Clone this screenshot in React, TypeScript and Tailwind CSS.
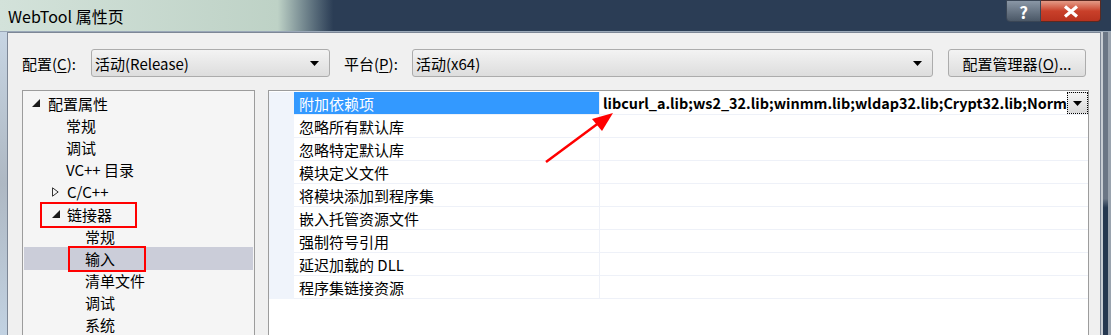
import React from 'react';

const font = { fontFamily: '"Noto Sans CJK SC", "Noto Sans", sans-serif' };

function Mn({ c }: { c: string }) {
    return <span className="underline underline-offset-2">{c}</span>;
}

function Combo({ text, width }: { text: string; width: string }) {
    return (
        <div className={`${width} h-[28px] flex items-center justify-between rounded-[3px] border border-[#acacac] bg-gradient-to-b from-[#f3f3f3] to-[#dddddd] pl-[3px] pr-[10px]`}>
            <span className="text-[15px] leading-none">{text}</span>
            <svg width="9" height="5" viewBox="0 0 9 5"><path d="M0 0h9L4.5 5z" fill="#000" /></svg>
        </div>
    );
}

function Expanded() {
    return <svg width="8" height="8" viewBox="0 0 8 8"><path d="M8 0V8H0z" fill="#1a1a1a" /></svg>;
}

function Collapsed() {
    return <svg width="7" height="10" viewBox="0 0 7 10"><path d="M0.5 0.8L6.2 5L0.5 9.2z" fill="none" stroke="#333" strokeWidth="1" /></svg>;
}

const tree = [
    { label: '配置属性', pad: 'pl-[9px]', icon: 'open', iw: 'w-[16px]' },
    { label: '常规', pad: 'pl-[43px]' },
    { label: '调试', pad: 'pl-[43px]' },
    { label: 'VC++ 目录', pad: 'pl-[43px]' },
    { label: 'C/C++', pad: 'pl-[29px]', icon: 'closed', iw: 'w-[15px]' },
    { label: '链接器', pad: 'pl-[29px]', icon: 'open', iw: 'w-[15px]', boxed: true },
    { label: '常规', pad: 'pl-[62px]' },
    { label: '输入', pad: 'pl-[62px]', selected: true, boxed: true },
    { label: '清单文件', pad: 'pl-[62px]' },
    { label: '调试', pad: 'pl-[62px]' },
    { label: '系统', pad: 'pl-[62px]' },
];

const props = [
    '附加依赖项',
    '忽略所有默认库',
    '忽略特定默认库',
    '模块定义文件',
    '将模块添加到程序集',
    '嵌入托管资源文件',
    '强制符号引用',
    '延迟加载的 DLL',
    '程序集链接资源',
];

export default function App() {
    return (
        <div className="relative w-[1111px] h-[335px] overflow-hidden bg-[#2b3d55] text-black" style={font}>
            {/* title bar */}
            <div className="h-[31px] flex items-center justify-between bg-gradient-to-r from-[#d3e2da] via-[#bed2c6] via-25% to-[#2b3d55] to-30%">
                <span className="pl-[8px] pt-[1px] text-[16px] leading-none">WebTool 属性页</span>
                <div className="self-start flex pr-[10px]">
                    <div className="w-[35px] h-[22px] flex items-center justify-center rounded-bl-[4px] border border-[#3a4656] bg-gradient-to-b from-[#8a97a6] to-[#4b5867] text-white text-[17px] font-bold leading-none">?</div>
                    <div className="w-[60px] h-[22px] flex items-center justify-center rounded-br-[4px] border border-l-0 border-[#5a2a22] bg-gradient-to-b from-[#e39a86] via-[#c9402a] to-[#b8321f]">
                        <svg width="16" height="13" viewBox="0 0 16 13"><path d="M2 1.5L14 11.5M14 1.5L2 11.5" stroke="#fff" strokeWidth="3.2" /></svg>
                    </div>
                </div>
            </div>
            <div className="h-[1px] bg-[#9aa8b8]" />
            <div className="flex h-[303px]">
                {/* left frame */}
                <div className="w-[7px] bg-gradient-to-b from-[#c7d5e3] via-[#aeb8c3] to-[#c2d2e2]" />
                {/* client area */}
                <div className="w-[1094px] border-t border-l border-r border-[#7d8796] bg-[#f0f0f0] pl-[14px] pr-[11px] pt-[16px]">
                    <div className="flex items-center h-[28px] text-[15px] leading-none">
                        <span className="w-[69px]">配置(<Mn c="C" />):</span>
                        <Combo text="活动(Release)" width="w-[239px]" />
                        <span className="ml-[14px] w-[68px]">平台(<Mn c="P" />):</span>
                        <Combo text="活动(x64)" width="w-[521px]" />
                        <div className="ml-[15px] w-[138px] h-[28px] flex items-center justify-center rounded-[3px] border border-[#acacac] bg-gradient-to-b from-[#f3f3f3] to-[#dddddd]">
                            配置管理器(<Mn c="O" />)...
                        </div>
                    </div>
                    <div className="flex gap-[13px] mt-[13px]">
                        {/* tree */}
                        <div className="w-[233px] h-[260px] shrink-0 border border-[#9c9c9c] bg-[#f5f5f5] pt-[1px] text-[15px] leading-none">
                            {tree.map((t, i) => (
                                <div key={i} className={`h-[22.2px] flex items-center ${t.pad} ${t.selected ? 'bg-[#cbcdd9] mx-[1px]' : ''}`}>
                                    {t.icon && (
                                        <span className={`${t.iw} flex items-center`}>
                                            {t.icon === 'open' ? <Expanded /> : <Collapsed />}
                                        </span>
                                    )}
                                    <span className={t.boxed ? `relative ${t.selected ? '-ml-[1px]' : ''}` : ''}>
                                        {t.label}
                                        {t.boxed && (
                                            <span className={`absolute border-2 border-[#ff0000] ${t.selected ? '-left-[17px] -right-[31px] -top-[5px] -bottom-[6px]' : '-left-[27px] -right-[25px] -top-[5px] -bottom-[6px]'}`} />
                                        )}
                                    </span>
                                </div>
                            ))}
                        </div>
                        {/* property grid */}
                        <div className="w-[821px] h-[260px] shrink-0 border border-[#9c9c9c] bg-white pt-[1px] text-[15px] leading-none">
                            {props.map((p, i) => (
                                <div key={i} className="flex h-[23px]">
                                    <div className="w-[25px] shrink-0 bg-[#f0f4fb]" />
                                    <div className={`w-[306px] shrink-0 flex items-center pl-[5px] border-b border-r border-[#eef1f8] ${i === 0 ? 'bg-[#3399ff] text-white border-[#3399ff]' : ''}`}>{p}</div>
                                    <div className="flex-1 min-w-0 flex items-center border-b border-[#eef1f8] pl-[3px]">
                                        {i === 0 && (
                                            <>
                                                <span className="flex-1 min-w-0 overflow-hidden whitespace-nowrap font-bold text-[14.4px] leading-[22px]">libcurl_a.lib;ws2_32.lib;winmm.lib;wldap32.lib;Crypt32.lib;Norm</span>
                                                <span className="w-[21px] h-[22px] shrink-0 flex items-center justify-center border border-dotted border-black bg-gradient-to-b from-[#f4f4f4] to-[#d9d9d9]">
                                                    <svg width="9" height="5" viewBox="0 0 9 5"><path d="M0 0h9L4.5 5z" fill="#000" /></svg>
                                                </span>
                                            </>
                                        )}
                                    </div>
                                </div>
                            ))}
                        </div>
                    </div>
                </div>
                {/* right frame */}
                <div className="w-[10px] flex">
                    <div className="w-[2px] bg-[#c8cdd3]" />
                    <div className="w-[5px] bg-gradient-to-b from-[#6b7685] via-[#6b7685] via-55% to-[#253850] to-58%" />
                    <div className="w-[3px] bg-[#9aa3ae]" />
                </div>
            </div>
            {/* red arrow annotation */}
            <svg className="absolute left-0 top-0 pointer-events-none" width="1111" height="335">
                <line x1="546" y1="162" x2="600" y2="122" stroke="#ff0000" strokeWidth="2.5" />
                <path d="M613 113L592 119L602 131z" fill="#ff0000" />
            </svg>
        </div>
    );
}
